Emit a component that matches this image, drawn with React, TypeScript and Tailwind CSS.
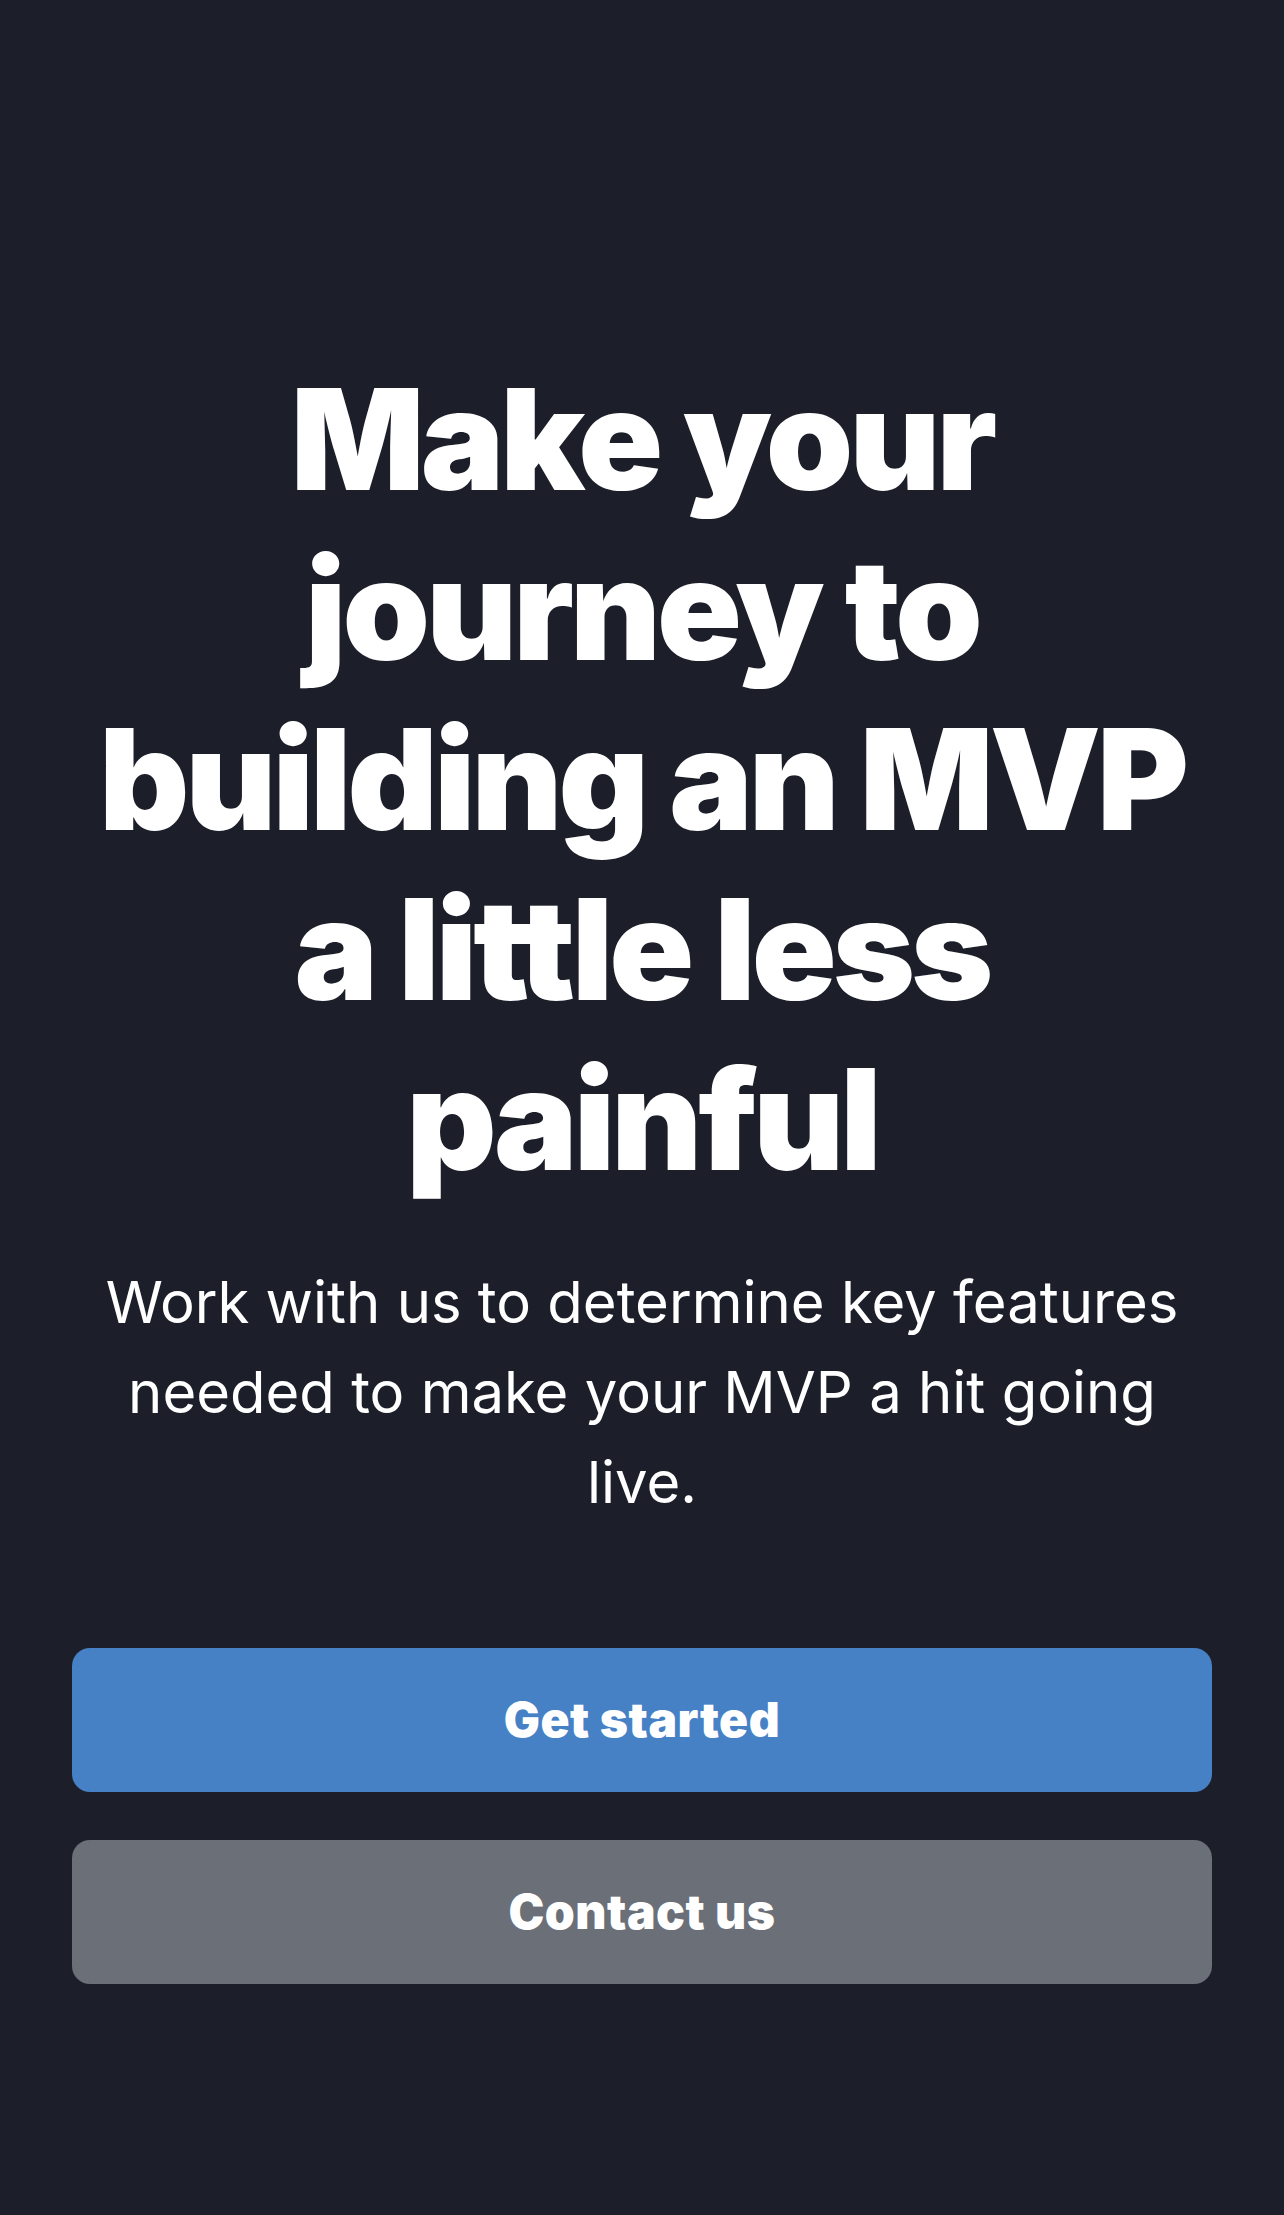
export default function App() {
  return (
    <main
      className="min-h-screen bg-[#1c1f29] text-white"
      style={{ fontFamily: 'Inter, "Noto Sans", sans-serif' }}
    >
      <section className="mx-auto flex w-full flex-col items-center px-[72px] pt-[354px] pb-[232px]">
        <h1 className="text-center text-[140px] font-black leading-[170px] tracking-[-0.028em]">
          Make your journey to building an MVP a little less painful
        </h1>

        <p className="mt-[53px] max-w-[1100px] text-center text-[58px] leading-[90px] text-white">
          Work with us to determine key features needed to make your MVP a hit going live.
        </p>

        <div className="mt-[121px] flex w-full flex-col gap-[48px]">
          <button className="h-[144px] w-full rounded-[18px] bg-[#4681c6] text-[48px] font-black tracking-[0.01em] text-white">
            Get started
          </button>
          <button className="h-[144px] w-full rounded-[18px] bg-[#6b6f77] text-[48px] font-black tracking-[0.01em] text-white">
            Contact us
          </button>
        </div>
      </section>
    </main>
  )
}
